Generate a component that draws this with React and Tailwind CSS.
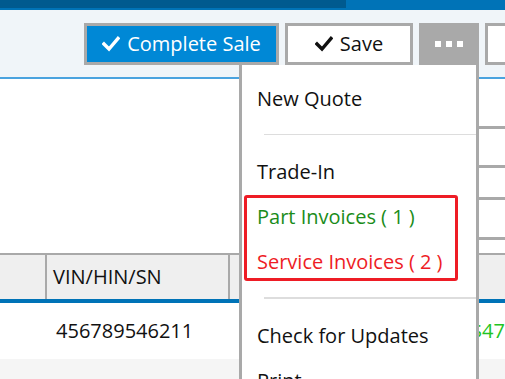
function CheckMark({ className }) {
  return (
    <svg viewBox="0 0 18 16" className={className} fill="none">
      <path d="M2 8 L7 13 L16 2.5" stroke="currentColor" strokeWidth="3.4" strokeLinecap="square" />
    </svg>
  );
}

function MenuItem({ children, color = "text-[#111]" }) {
  return (
    <div className={`flex h-[45px] items-center pl-[15px] ${color}`}>{children}</div>
  );
}

export default function App() {
  return (
    <div
      className="relative h-[379px] w-[505px] overflow-hidden bg-white text-[20px] text-[#111]"
      style={{ fontFamily: '"Open Sans", "Noto Sans", sans-serif' }}
    >
      {/* top strip */}
      <div className="h-[10px] bg-[#0073b7]">
        <div className="h-[8px] w-[346px] bg-[#005a8f]" />
      </div>

      {/* toolbar */}
      <div className="flex h-[67px] items-start gap-[6px] bg-[#f0f5f9] pl-[84px] pt-[13px]">
        <button className="flex h-[42px] w-[195px] shrink-0 items-center justify-center gap-[7px] border-[3px] border-[#a9a9a9] bg-[#0088d6] text-white">
          <CheckMark className="h-[16px] w-[18px]" />
          <span className="leading-none">Complete Sale</span>
        </button>
        <button className="flex h-[42px] w-[128px] shrink-0 items-center justify-center gap-[7px] border-[3px] border-[#a9a9a9] bg-white text-[#111]">
          <CheckMark className="h-[16px] w-[18px]" />
          <span className="leading-none">Save</span>
        </button>
        <button className="flex h-[42px] w-[60px] shrink-0 items-center justify-center gap-[5px] bg-[#a9a9a9]">
          <span className="h-[6px] w-[6px] bg-white" />
          <span className="h-[6px] w-[6px] bg-white" />
          <span className="h-[6px] w-[6px] bg-white" />
        </button>
        <button className="h-[42px] w-[60px] shrink-0 border-[3px] border-[#a9a9a9] bg-white" />
      </div>
      <div className="h-[2px] bg-[#4aa3df]" />

      {/* form area */}
      <div className="flex h-[174px]">
        <div className="flex-1" />
        <div className="flex w-[26px] flex-col pt-[47px]">
          <div className="h-[39px] border-t-[3px] border-[#a9a9a9]" />
          <div className="h-[32px] border-t-[3px] border-[#a9a9a9]" />
          <div className="h-[40px] border-t-[3px] border-[#a9a9a9]" />
          <div className="border-t-[3px] border-[#a9a9a9]" />
        </div>
      </div>

      {/* table */}
      <div className="flex h-[46px] border-t-2 border-[#a9a9a9] bg-[#efefef]">
        <div className="w-[47px] border-r-2 border-[#a9a9a9]" />
        <div className="flex w-[183px] items-center border-r-2 border-[#a9a9a9] pl-[6px]">VIN/HIN/SN</div>
        <div className="flex-1" />
      </div>
      <div className="h-[4px] bg-[#0073b7]" />
      <div className="flex h-[56px] items-center">
        <div className="w-[57px]" />
        <div className="w-[422px]">456789546211</div>
        <div className="text-[#22c422]">$47</div>
      </div>
      <div className="h-[30px] bg-[#f5f5f5]" />

      {/* dropdown menu */}
      <div className="absolute left-[239px] top-[65px] h-[330px] w-[240px] border-x-[3px] border-b-[3px] border-[#a9a9a9] bg-white pt-[11px]">
        <MenuItem>New Quote</MenuItem>
        <div className="ml-[22px] mt-[13px] h-px bg-[#dddddd]" />
        <div className="mt-[14px]">
          <MenuItem>Trade-In</MenuItem>
        </div>
        <MenuItem color="text-[#1a8c1a]">Part Invoices ( 1 )</MenuItem>
        <MenuItem color="text-[#ee1c25]">Service Invoices ( 2 )</MenuItem>
        <div className="ml-[22px] mt-[13px] h-[2px] bg-[#dddddd]" />
        <div className="mt-[14px]">
          <MenuItem>Check for Updates</MenuItem>
        </div>
        <MenuItem>Print</MenuItem>

        {/* annotation box */}
        <div className="absolute left-[2px] top-[130px] h-[86px] w-[214px] rounded-[3px] border-[3px] border-[#ee1c25]" />
      </div>
    </div>
  );
}
